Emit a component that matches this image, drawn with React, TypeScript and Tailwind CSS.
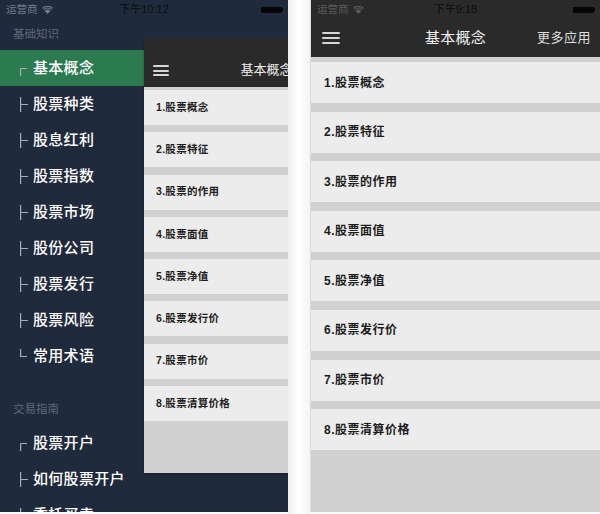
import clsx from 'clsx'

const topics = ['1.股票概念', '2.股票特征', '3.股票的作用', '4.股票面值', '5.股票净值', '6.股票发行价', '7.股票市价', '8.股票清算价格']

const basics = ['基本概念', '股票种类', '股息红利', '股票指数', '股票市场', '股份公司', '股票发行', '股票风险', '常用术语']
const trading = ['股票开户', '如何股票开户', '委托买卖']

function Wifi({ color }: { color: string }) {
  return (
    <svg width="11" height="8" viewBox="0 0 11 8" className="ml-[4px]">
      <path d="M5.5 8 L2.6 4.9 A4.2 4.2 0 0 1 8.4 4.9 Z" fill={color} />
      <path d="M1.5 3.6 A5.8 5.8 0 0 1 9.5 3.6" stroke={color} strokeWidth="1.2" fill="none" />
      <path d="M0.4 2.3 A7.4 7.4 0 0 1 10.6 2.3" stroke={color} strokeWidth="1.1" fill="none" />
    </svg>
  )
}

function Battery() {
  return (
    <div className="flex items-center">
      <div className="h-[6px] w-[21px] rounded-[1px] bg-[#050505]" />
      <div className="h-[3px] w-[1.5px] bg-[#050505]" />
    </div>
  )
}

function StatusBar({ time, carrier }: { time: string; carrier: string }) {
  return (
    <div className="relative flex h-[19px] items-center justify-between pl-[6px] pr-[5px] text-[10.5px]">
      <div className="flex items-center" style={{ color: carrier }}>
        <span>运营商</span>
        <Wifi color={carrier} />
      </div>
      <span className="absolute inset-x-0 text-center text-[11px] text-[#0c0c0c]">{time}</span>
      <Battery />
    </div>
  )
}

function Burger({ w, gap, thick }: { w: string; gap: string; thick: string }) {
  return (
    <div className={clsx('flex flex-col', w, gap)}>
      <span className={clsx('block rounded-full bg-[#d6d6d6]', thick)} />
      <span className={clsx('block rounded-full bg-[#d6d6d6]', thick)} />
      <span className={clsx('block rounded-full bg-[#d6d6d6]', thick)} />
    </div>
  )
}

function Branch({ kind }: { kind: 'first' | 'mid' | 'last' }) {
  const d =
    kind === 'first' ? 'M0.6 7.5 V15 M0.6 7.5 H7' : kind === 'mid' ? 'M0.6 0 V15 M0.6 7.5 H8' : 'M0.6 0 V7.5 H7'
  return (
    <svg width="8" height="15" viewBox="0 0 8 15" className="mr-[5px] shrink-0">
      <path d={d} stroke="#a7adb7" strokeWidth="1.2" fill="none" />
    </svg>
  )
}

function MenuGroup({ title, items, first, active }: { title: string; items: string[]; first?: boolean; active?: number }) {
  return (
    <div className={clsx(!first && 'mt-[20px]')}>
      <div className="flex h-[31px] items-end pb-[7px] pl-[13px] text-[11.5px] text-[#5f6878]">{title}</div>
      {items.map((item, i) => (
        <div
          key={item}
          className={clsx(
            'flex h-[36px] items-center pl-[20px] text-[15px] font-medium tracking-[0.3px] text-white',
            i === active && 'bg-[#2c7a50]',
          )}
        >
          <Branch kind={i === 0 ? 'first' : i === items.length - 1 ? 'last' : 'mid'} />
          <span>{item}</span>
        </div>
      ))}
    </div>
  )
}

function DrawerScreen() {
  return (
    <div className="relative h-[512px] w-[288px] shrink-0 overflow-hidden bg-[#1f2a3c]">
      <StatusBar time="下午10:12" carrier="#767d8b" />
      <MenuGroup title="基础知识" items={basics} first active={0} />
      <MenuGroup title="交易指南" items={trading} />

      {/* main view pushed aside and shrunk by the drawer */}
      <div className="absolute left-[144px] top-[38px] flex h-[435px] w-[245px] flex-col bg-[#d0d0d0] shadow-[0_1px_2px_rgba(0,0,0,0.35)]">
        <div className="relative flex h-[49px] items-end bg-[#2a2a2a] pb-[11px] pl-[9px]">
          <Burger w="w-[16px]" gap="gap-[2.5px]" thick="h-[2px]" />
          <span className="absolute inset-x-0 bottom-[8px] text-center text-[13px] text-[#eeeeee]">基本概念</span>
        </div>
        <div className="mt-[3px] flex flex-col gap-[7.3px]">
          {topics.map((t) => (
            <div
              key={t}
              className="flex h-[35px] items-center bg-[#ececec] pl-[12px] text-[10.5px] font-bold tracking-[0.3px] text-[#1e1e1e]"
            >
              {t}
            </div>
          ))}
        </div>
      </div>
    </div>
  )
}

function MainScreen() {
  return (
    <div className="flex h-[512px] w-[290px] shrink-0 flex-col border-l border-[#dcdcdc] bg-[#d0d0d0]">
      <div className="bg-[#2a2a2a]">
        <StatusBar time="下午9:18" carrier="#5c5c5c" />
        <div className="relative flex h-[38px] items-center justify-between pl-[11px] pr-[9px]">
          <Burger w="w-[18px]" gap="gap-[3px]" thick="h-[2px]" />
          <span className="absolute inset-x-0 text-center text-[15px] tracking-[0.3px] text-[#f2f2f2]">基本概念</span>
          <span className="relative text-[13px] tracking-[0.5px] text-[#dedede]">更多应用</span>
        </div>
      </div>
      <div className="mt-[5px] flex flex-col gap-[8.6px]">
        {topics.map((t) => (
          <div
            key={t}
            className="flex h-[41px] items-center bg-[#ececec] pl-[13px] text-[12px] font-bold tracking-[0.5px] text-[#1c1c1c]"
          >
            {t}
          </div>
        ))}
      </div>
    </div>
  )
}

export default function App() {
  return (
    <div className="flex h-[514px] w-[600px] bg-[#fafafa] font-['Liberation_Sans','Noto_Sans_CJK_SC',sans-serif]">
      <DrawerScreen />
      <div className="w-[22px] shrink-0 bg-gradient-to-r from-[#f0f0f0] via-white to-[#f4f4f4]" />
      <MainScreen />
    </div>
  )
}
